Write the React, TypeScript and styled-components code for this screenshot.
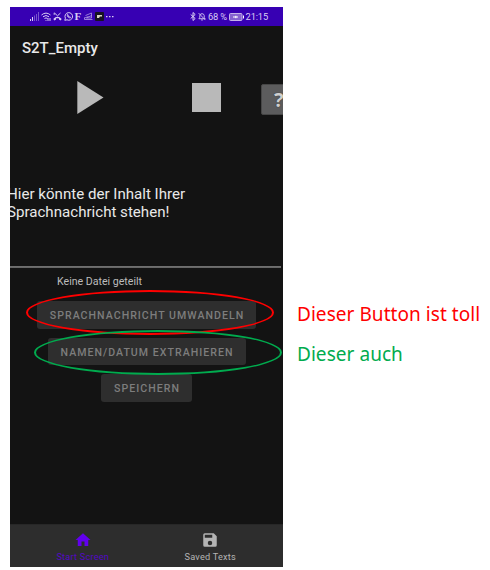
import React from "react";
import styled, { createGlobalStyle } from "styled-components";

const GlobalStyle = createGlobalStyle`
  * { box-sizing: border-box; }
  html, body { margin: 0; background: #fff; }
`;

const Page = styled.main`
  position: relative;
  display: flex;
  width: 490px;
  height: 570px;
  padding: 7px 0 0 10px;
  overflow: hidden;
  background: #fff;
`;

const Phone = styled.section`
  display: flex;
  flex-direction: column;
  flex: none;
  width: 273px;
  height: 560px;
  overflow: hidden;
  background: #131313;
  color: #e9e9e9;
  font-family: Roboto, sans-serif;
`;

const StatusBar = styled.header`
  display: flex;
  justify-content: space-between;
  align-items: center;
  flex: none;
  height: 19px;
  padding: 0 15px 0 20px;
  background: #3700b3;
  color: #d9cdf3;
  font-size: 9.5px;
`;

const StatusGroup = styled.div<{ $gap: number }>`
  display: flex;
  align-items: center;
  gap: ${(p) => p.$gap}px;
  white-space: nowrap;
  line-height: 19px;
  svg { display: block; flex: none; }
`;

const StatusText = styled.span`
  font-size: 9.3px;
  letter-spacing: -0.15px;
`;

const SerifMark = styled.span`
  width: 8px;
  font: bold 11px/19px "Liberation Serif", serif;
`;

const Title = styled.h1`
  flex: none;
  height: 42px;
  margin: 0;
  padding: 0 12px;
  font-size: 15px;
  font-weight: 500;
  line-height: 45px;
`;

const Controls = styled.div`
  display: flex;
  align-items: flex-start;
  flex: none;
  height: 115px;
  padding: 12px 0 0 67px;
  svg { display: block; flex: none; }
`;

const StopButton = styled.div`
  flex: none;
  width: 29px;
  height: 29px;
  margin: 3px 40px 0 88px;
  background: #b9b9b9;
`;

const HelpButton = styled.div`
  flex: none;
  width: 40px;
  height: 31px;
  margin-top: 4px;
  padding-left: 12px;
  border: 1px solid #464646;
  border-radius: 2px;
  background: #5c5c5d;
  color: #cfcfcf;
  font: bold 20px/29px "Noto Sans", sans-serif;
  text-shadow: 0 0 1px #222;
`;

const Message = styled.p`
  flex: none;
  height: 83px;
  margin: 0 0 0 -3px;
  padding-top: 2px;
  font-size: 15.1px;
  line-height: 18px;
  white-space: pre;
`;

const Divider = styled.div`
  flex: none;
  width: 271px;
  height: 2px;
  background: linear-gradient(#747474, #626262);
`;

const FileNote = styled.p`
  flex: none;
  height: 33px;
  margin: 0;
  padding-left: 47px;
  color: #bdbdbd;
  font-size: 10.6px;
  line-height: 28px;
`;

const Actions = styled.div`
  display: flex;
  flex-direction: column;
  align-items: center;
  gap: 9px;
  flex: 1;
`;

const ActionButton = styled.div<{ $width: number }>`
  width: ${(p) => p.$width}px;
  height: 27.5px;
  padding-left: 1px;
  border-radius: 3px;
  background: #2e2e2e;
  color: #7d7d7d;
  font-size: 10.6px;
  font-weight: 500;
  line-height: 29px;
  letter-spacing: 1.02px;
  text-align: center;
  white-space: nowrap;
`;

const BottomNav = styled.nav`
  display: flex;
  flex: none;
  height: 43px;
  padding: 0 9px;
  border-top: 1px solid #272727;
  background: #2d2d2d;
`;

const NavItem = styled.div<{ $active?: boolean }>`
  display: flex;
  flex-direction: column;
  align-items: center;
  flex: 1;
  padding-top: 6px;
  color: ${(p) => (p.$active ? "#5309c4" : "#b4b4b4")};
  font-size: 9.2px;
  line-height: 16px;
  svg { display: block; color: ${(p) => (p.$active ? "#6200ee" : "#b4b4b4")}; }
`;

const NavLabel = styled.span`
  letter-spacing: 0.2px;
`;

const Notes = styled.aside`
  display: flex;
  flex-direction: column;
  padding: 287px 0 0 14px;
  font: 19px/40px "Noto Sans", sans-serif;
  letter-spacing: 0.05px;
  white-space: nowrap;
`;

const Note = styled.span<{ $color: string }>`
  color: ${(p) => p.$color};
`;

const Ring = styled.div<{ $x: number; $y: number; $color: string }>`
  position: absolute;
  left: ${(p) => p.$x}px;
  top: ${(p) => p.$y}px;
  width: 248px;
  height: 45px;
  border: 2px solid ${(p) => p.$color};
  border-radius: 50%;
`;

const SystemIcons = () => (
  <>
    <svg width="9" height="9" viewBox="0 0 9 9" fill="currentColor">
      <path d="M0 7h1v2H0zM2 5h1v4H2z" />
      <path opacity=".4" d="M4 3.5h1V9H4zM6 2h1v7H6zM8 0h1v9H8z" />
    </svg>
    <svg width="10" height="9" viewBox="0 0 10 9" fill="none" stroke="currentColor">
      <path d="M.5 3Q5-.8 9.5 3M2 4.8Q5 2.2 8 4.8M3.5 6.5Q5 5.3 6.5 6.5M5 8v.8M7 6v3M9 6v3" />
    </svg>
    <svg width="9" height="9" viewBox="0 0 9 9" fill="none" stroke="currentColor">
      <path d="M1.5 1 4.5 3.8 7.5 1M1.2.8v2" />
      <path d="M.3 7Q4.5 2.6 8.7 7L7.5 8.6 6 7.4V6.2H3v1.2L1.5 8.6z" fill="currentColor" stroke="none" />
    </svg>
    <svg width="9" height="9" viewBox="0 0 9 9" fill="none" stroke="currentColor">
      <path d="M.8 8.3 1.4 6.2A3.8 3.8 0 1 1 3 7.8z" />
      <path d="M3 2.7q.2 2.8 3.2 3.4l.3-1-1-.5-.5.5-1-1 .4-.5-.5-1z" strokeWidth=".8" />
    </svg>
    <SerifMark>F</SerifMark>
    <svg width="9" height="9" viewBox="0 0 9 9" fill="none" stroke="currentColor" strokeWidth=".8" opacity=".75">
      <path d="M1.5 3.5 7.5 1v5h-5L8 3.3M.5 5.5v2h8M.5 6l4-1.5" />
    </svg>
    <svg width="9" height="9" viewBox="0 0 9 9">
      <rect width="9" height="9" rx="1" fill="#171321" />
      <path d="M2 3h5v1.5H5L4 6H2z" fill="#d8d4c5" />
    </svg>
    <svg width="8" height="9" viewBox="0 0 8 9" fill="currentColor">
      <path d="M0 4h1.5v1.2H0zM3 4h1.5v1.2H3zM6 4h1.5v1.2H6z" />
    </svg>
  </>
);

const App = () => (
  <Page>
    <GlobalStyle />
    <Phone>
      <StatusBar>
        <StatusGroup $gap={1.9}>
          <SystemIcons />
        </StatusGroup>
        <StatusGroup $gap={1.8}>
          <svg width="6" height="9" viewBox="0 0 6 9" fill="none" stroke="currentColor">
            <path d="m.7 2.5 4.5 4L3 8.5v-8l2.2 2-4.5 4" />
          </svg>
          <svg width="8" height="9" viewBox="0 0 9 9" fill="none" stroke="currentColor">
            <path d="M1 7h7L7 5.5V3.5Q6.8 1.5 4.5 1.3 2.2 1.5 2 3.5v2zM3.5 8.4h2M.7.7 8.3 8.5" />
          </svg>
          <StatusText>68 %</StatusText>
          <svg width="15" height="8" viewBox="0 0 15 8">
            <rect x=".5" y=".5" width="12.5" height="7" rx="1" fill="#8562d0" stroke="#c4b2ea" />
            <path d="M4 3.5h2l1-1L7.5 3.5H9v1H7.5L7 5.5l-1-1H4zM14 2.5h1v3h-1z" fill="#fff" />
          </svg>
          <StatusText>21:15</StatusText>
        </StatusGroup>
      </StatusBar>
      <Title>S2T_Empty</Title>
      <Controls>
        <svg width="27" height="35" viewBox="0 0 27 35">
          <path d="M.3 1 26.5 17.5.3 34z" fill="#b9b9b9" />
        </svg>
        <StopButton />
        <HelpButton>?</HelpButton>
      </Controls>
      <Message>{"Hier könnte der Inhalt Ihrer\nSprachnachricht stehen!"}</Message>
      <Divider />
      <FileNote>Keine Datei geteilt</FileNote>
      <Actions>
        <ActionButton $width={219}>SPRACHNACHRICHT UMWANDELN</ActionButton>
        <ActionButton $width={198}>NAMEN/DATUM EXTRAHIEREN</ActionButton>
        <ActionButton $width={91}>SPEICHERN</ActionButton>
      </Actions>
      <BottomNav>
        <NavItem $active>
          <svg width="18" height="18" viewBox="0 0 24 24" fill="currentColor">
            <path d="M10 20v-6h4v6h5v-8h3L12 3 2 12h3v8z" />
          </svg>
          <NavLabel>Start Screen</NavLabel>
        </NavItem>
        <NavItem>
          <svg width="18" height="18" viewBox="0 0 24 24" fill="currentColor">
            <path d="M17 3H5a2 2 0 0 0-2 2v14a2 2 0 0 0 2 2h14a2 2 0 0 0 2-2V7zm-5 16a3 3 0 1 1 0-6 3 3 0 0 1 0 6zm3-10H5V5h10z" />
          </svg>
          <NavLabel>Saved Texts</NavLabel>
        </NavItem>
      </BottomNav>
    </Phone>
    <Notes>
      <Note $color="#ff0000">Dieser Button ist toll</Note>
      <Note $color="#00ab4e">Dieser auch</Note>
    </Notes>
    <Ring $x={26} $y={290} $color="#ff0000" />
    <Ring $x={34} $y={330} $color="#00ab4e" />
  </Page>
);

export default App;
